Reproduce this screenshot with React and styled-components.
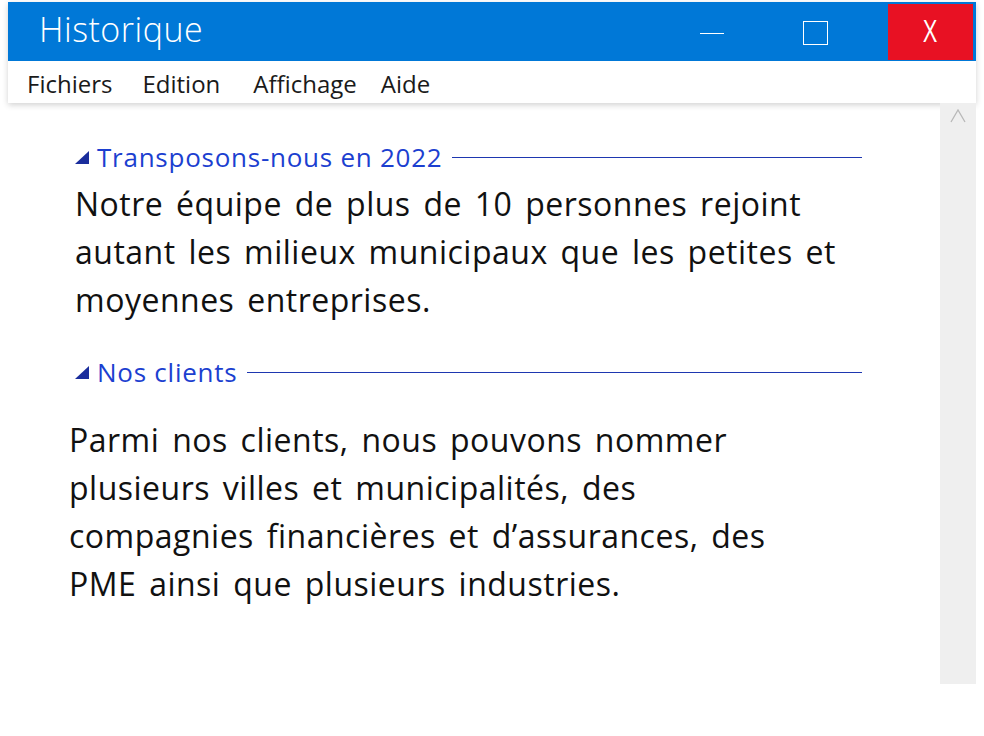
import React from "react";
import styled, { createGlobalStyle } from "styled-components";

const GlobalStyle = createGlobalStyle`
  html, body {
    margin: 0;
    padding: 0;
    background: #ffffff;
  }
  body {
    font-family: "Open Sans", "Noto Sans", sans-serif;
  }
`;

const Frame = styled.div`
  margin: 2px 0 0 8px;
  width: 968px;
`;

const Chrome = styled.div`
  box-shadow: 0 2px 6px rgba(0, 0, 0, 0.18);
`;

const TitleBar = styled.div`
  height: 59px;
  background: #0078d7;
  display: flex;
  align-items: stretch;
`;

const Title = styled.div`
  flex: 1;
  display: flex;
  align-items: center;
  padding-left: 31px;
  padding-bottom: 6px;
  color: #ffffff;
  font-family: "Open Sans", sans-serif;
  font-weight: 300;
  font-size: 34px;
  letter-spacing: 0.5px;
`;

const WinButton = styled.button`
  width: ${(p) => p.$w}px;
  border: none;
  margin: ${(p) => (p.$close ? "2px 3px 1px 0" : "0 43px 0 0")};
  background: ${(p) => (p.$close ? "#e81123" : "transparent")};
  color: #ffffff;
  display: flex;
  align-items: center;
  justify-content: center;
  padding: 0 0 4px;
  font-family: "Open Sans", sans-serif;
  font-weight: 400;
  font-size: 28px;
`;

const CloseGlyph = styled.span`
  display: inline-block;
  transform: scale(0.85, 1.08);
`;

const MinLine = styled.span`
  display: block;
  width: 24px;
  height: 1px;
  background: #ffffff;
  margin-top: 8px;
`;

const MaxBox = styled.span`
  display: block;
  width: 23px;
  height: 22px;
  border: 1.5px solid #ffffff;
  margin-top: 6px;
`;

const MenuBar = styled.div`
  height: 42px;
  background: #ffffff;
  display: flex;
  align-items: center;
  padding: 3px 0 0 19px;
  box-sizing: border-box;
  font-family: "Open Sans", sans-serif;
  font-size: 24px;
  color: #1a1a1a;
`;

const MenuItem = styled.span`
  margin-right: ${(p) => p.$gap}px;
`;

const Body = styled.div`
  display: grid;
  grid-template-columns: 1fr 36px;
  height: 581px;
`;

const Content = styled.div`
  padding: 37px 0 0 67px;
  width: 787px;
`;

const Scrollbar = styled.div`
  background: #efefef;
  display: flex;
  justify-content: center;
  padding-top: 6px;
`;

const SectionHead = styled.div`
  display: flex;
  align-items: center;
  height: 34px;
  margin-top: ${(p) => p.$top || 0}px;
  color: #1c3fd0;
  font-family: "Open Sans", sans-serif;
  font-size: 26px;
  letter-spacing: 0.75px;
`;

const Label = styled.span`
  margin: 0 10px 0 8px;
  white-space: nowrap;
`;

const Rule = styled.div`
  flex: 1;
  height: 1px;
  background: #1e37b0;
`;

const Paragraph = styled.p`
  margin: ${(p) => p.$top}px 0 0 ${(p) => p.$indent || 0}px;
  font-family: "Open Sans", sans-serif;
  font-size: 32px;
  letter-spacing: 0.5px;
  word-spacing: 4px;
  line-height: 48px;
  color: #111111;
  white-space: nowrap;
`;

const Triangle = () => (
  <svg width="14" height="13" viewBox="0 0 14 13">
    <polygon points="14,0 14,13 0,13" fill="#1a2d9c" />
  </svg>
);

export default function App() {
  return (
    <>
      <GlobalStyle />
      <Frame>
        <Chrome>
          <TitleBar>
            <Title>Historique</Title>
            <WinButton $w={60}>
              <MinLine />
            </WinButton>
            <WinButton $w={60}>
              <MaxBox />
            </WinButton>
            <WinButton $w={85} $close>
              <CloseGlyph>X</CloseGlyph>
            </WinButton>
          </TitleBar>
          <MenuBar>
            <MenuItem $gap={30}>Fichiers</MenuItem>
            <MenuItem $gap={33}>Edition</MenuItem>
            <MenuItem $gap={24}>Affichage</MenuItem>
            <MenuItem $gap={0}>Aide</MenuItem>
          </MenuBar>
        </Chrome>
        <Body>
          <Content>
            <SectionHead>
              <Triangle />
              <Label>Transposons-nous en 2022</Label>
              <Rule />
            </SectionHead>
            <Paragraph $top={6}>
              Notre équipe de plus de 10 personnes rejoint
              <br />
              autant les milieux municipaux que les petites et
              <br />
              moyennes entreprises.
            </Paragraph>
            <SectionHead $top={31}>
              <Triangle />
              <Label>Nos clients</Label>
              <Rule />
            </SectionHead>
            <Paragraph $top={27} $indent={-6}>
              Parmi nos clients, nous pouvons nommer
              <br />
              plusieurs villes et municipalités, des
              <br />
              compagnies financières et d’assurances, des
              <br />
              PME ainsi que plusieurs industries.
            </Paragraph>
          </Content>
          <Scrollbar>
            <svg width="16" height="14" viewBox="0 0 16 14">
              <polyline
                points="1,13 8,1 15,13"
                fill="none"
                stroke="#b8b8b8"
                strokeWidth="1.3"
              />
            </svg>
          </Scrollbar>
        </Body>
      </Frame>
    </>
  );
}
